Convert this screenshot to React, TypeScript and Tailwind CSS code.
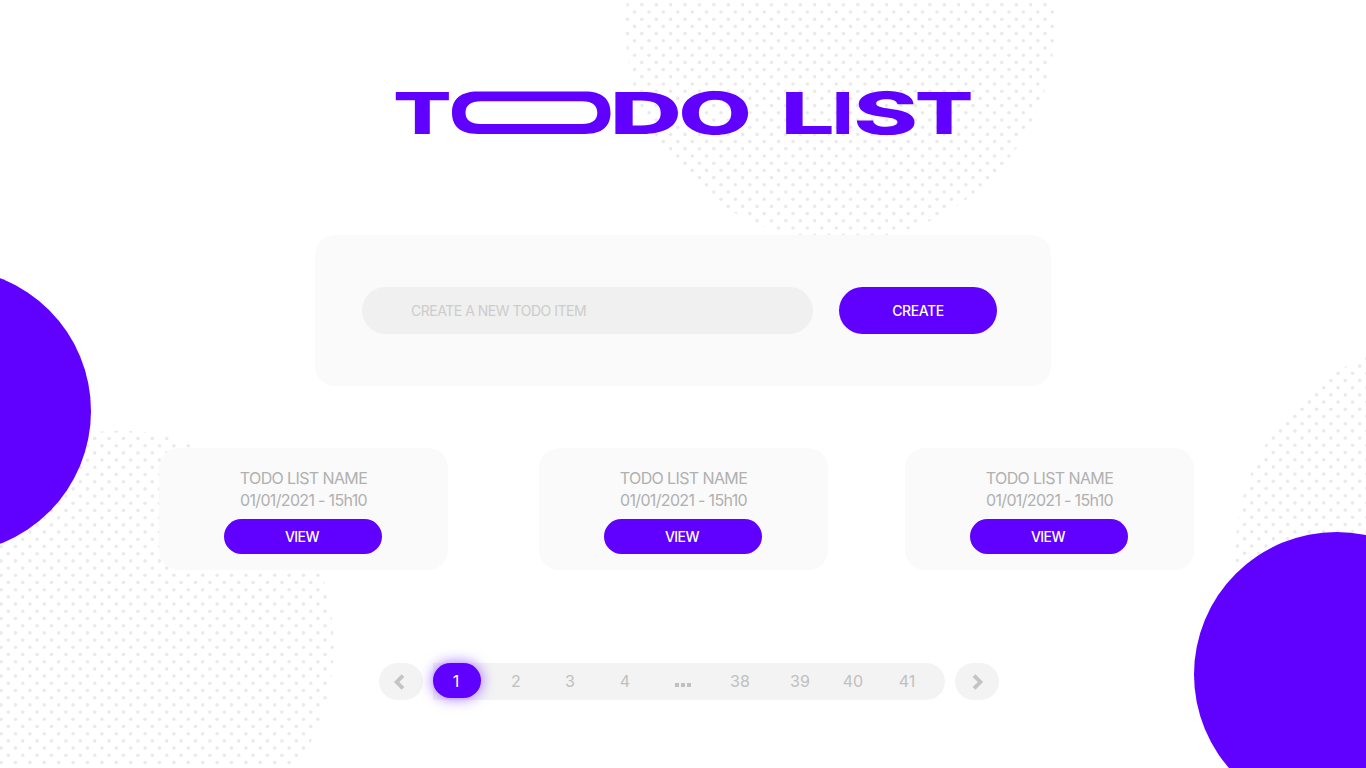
const letters = [
  { ch: "T", x: 393.1, sx: 1.5 },
  { ch: "D", x: 609.7, sx: 1.73 },
  { ch: "O", x: 678.3, sx: 1.65 },
  { ch: "L", x: 780.7, sx: 1.65 },
  { ch: "I", x: 832.2, sx: 1.27 },
  { ch: "S", x: 853.4, sx: 1.69 },
  { ch: "T", x: 914.8, sx: 1.5 },
];

const halftones = [
  { id: "top", cx: 840, cy: 26, px: 627.4, py: 4.8 },
  { id: "left", cx: 119, cy: 645.5, px: 260.3, py: 575.3 },
  { id: "right", cx: 1450, cy: 554, px: 1237.3, py: 531.7 },
];

const RADIUS = 214.7;
const STEP = 7.2;

function dots(h: { cx: number; cy: number; px: number; py: number }) {
  const out: { x: number; y: number }[] = [];
  const firstCol = Math.floor((h.cx - RADIUS - h.px) / STEP);
  const lastCol = Math.ceil((h.cx + RADIUS - h.px) / STEP);
  const firstRow = Math.floor((h.cy - RADIUS - h.py) / STEP);
  const lastRow = Math.ceil((h.cy + RADIUS - h.py) / STEP);
  for (let r = firstRow; r <= lastRow; r++) {
    for (let c = firstCol; c <= lastCol; c++) {
      if ((r + c) % 2 !== 0) continue;
      const x = h.px + c * STEP;
      const y = h.py + r * STEP;
      if (x < -3 || x > 1369 || y < -3 || y > 771) continue;
      if (Math.hypot(x - h.cx, y - h.cy) < RADIUS + 2) out.push({ x, y });
    }
  }
  return out;
}

function Backdrop() {
  return (
    <svg className="absolute inset-0" width="1366" height="768" viewBox="0 0 1366 768">
      {halftones.map((h) => (
        <g key={h.id}>
          <clipPath id={h.id}>
            <circle cx={h.cx} cy={h.cy} r={RADIUS} />
          </clipPath>
          <g clipPath={`url(#${h.id})`} fill="#eaeaea">
            {dots(h).map((d, i) => (
              <circle key={i} cx={d.x} cy={d.y} r="1.8" />
            ))}
          </g>
        </g>
      ))}
      <circle cx="-51.5" cy="411" r="142.5" fill="#6000ff" />
      <circle cx="1336.5" cy="674.5" r="142.5" fill="#6000ff" />
    </svg>
  );
}

function Wordmark() {
  return (
    <svg width="600" height="90" viewBox="383 68 600 90" fill="#6000ff">
      {letters.map((l, i) => (
        <text key={i} transform={`translate(${l.x} 134) scale(${l.sx} 1)`} fontFamily="Inter, sans-serif" fontWeight="850" fontSize="57.8">
          {l.ch}
        </text>
      ))}
      <path
        fillRule="evenodd"
        d="M478 91.6H585C602 91.6 610.5 99 610.5 112.8S602 134 585 134H478C460.5 134 452 126.5 452 112.8S460.5 91.6 478 91.6ZM481 101.3C470.5 101.3 465.5 105.5 465.5 112.8S470.5 124 481 124H582C592.5 124 597.3 120 597.3 112.8S592.5 101.3 582 101.3Z"
      />
    </svg>
  );
}

function Card() {
  return (
    <article className="flex h-[122px] w-[289px] flex-col items-center rounded-[20px] bg-[#fafafa] pr-px pt-[19px] text-[#b0b0b0]">
      <h2 className="h-[22px] whitespace-nowrap pl-px text-base leading-[22px] tracking-[-0.62px]">TODO LIST NAME</h2>
      <p className="h-[22px] whitespace-nowrap pl-px text-base leading-[22px] tracking-[-0.67px]">01/01/2021 - 15h10</p>
      <button className="mt-2 h-[35px] w-[158px] rounded-full bg-[#6000ff] pr-0.5 text-sm font-medium tracking-[-0.5px] text-white">VIEW</button>
    </article>
  );
}

function Chevron({ flip = false }: { flip?: boolean }) {
  return (
    <svg className={flip ? "rotate-180" : ""} width="12" height="16" viewBox="0 0 12 16" fill="none" stroke="#c4c4c4" strokeWidth="3.8">
      <path d="M10 1.7L3.6 8L10 14.3" />
    </svg>
  );
}

export default function App() {
  return (
    <div className="relative h-[768px] w-[1366px] overflow-hidden bg-white font-[Inter,sans-serif]">
      <Backdrop />
      <main className="relative flex h-full flex-col">
        <h1 className="flex h-[235px] pl-[383px] pt-[68px]">
          <Wordmark />
        </h1>

        <form className="ml-[315px] flex h-[151px] w-[736px] gap-[26px] rounded-[20px] bg-[#fafafa] pl-[47px] pt-[52px]" onSubmit={(e) => e.preventDefault()}>
          <input
            className="h-[47px] w-[451px] rounded-full bg-[#f0f0f0] pl-[49px] text-sm tracking-[-0.48px] outline-none placeholder:text-[#cccccc]"
            placeholder="CREATE A NEW TODO ITEM"
          />
          <button className="h-[47px] w-[158px] rounded-full bg-[#6000ff] text-sm font-medium tracking-[-0.45px] text-white">CREATE</button>
        </form>

        <section className="mt-[62px] flex pl-[159px]">
          <Card />
          <div className="w-[91px]" />
          <Card />
          <div className="w-[77px]" />
          <Card />
        </section>

        <nav className="mt-[93px] flex h-[37px] gap-2.5 pl-[379px] text-base text-[#c0c0c0]">
          <button className="flex w-11 items-center rounded-full bg-[#f3f3f3] pl-[14px]">
            <Chevron />
          </button>
          <div className="flex w-[512px] rounded-r-full rounded-l-[18px] bg-[#f3f3f3] leading-[36px]">
            <span className="h-[35px] w-12 rounded-[17.5px] bg-[#6000ff] pr-0.5 text-center text-white shadow-[0_0_14px_rgba(96,0,255,0.6)]">1</span>
            <span className="w-[70px] text-center">2</span>
            <span className="w-[38px] text-center">3</span>
            <span className="w-[72px] text-center">4</span>
            <span className="flex w-[43px] items-center justify-center gap-0.5 pt-[7px]">
              <i className="size-1 bg-[#c0c0c0]" />
              <i className="size-1 bg-[#c0c0c0]" />
              <i className="size-1 bg-[#c0c0c0]" />
            </span>
            <span className="w-[72px] text-center">38</span>
            <span className="w-[48px] text-center">39</span>
            <span className="w-[58px] text-center">40</span>
            <span className="w-[50px] text-center">41</span>
          </div>
          <button className="flex w-11 items-center rounded-full bg-[#f3f3f3] pl-[17px]">
            <Chevron flip />
          </button>
        </nav>
      </main>
    </div>
  );
}
